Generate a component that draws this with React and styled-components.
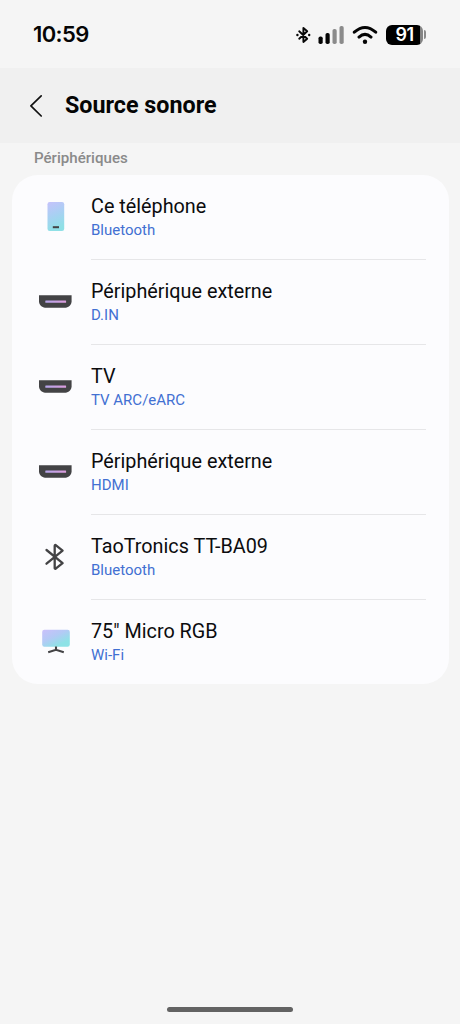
import React from "react";
import styled, { createGlobalStyle } from "styled-components";

const ink = "#0c0c0e";
const blue = "#4270d2";
const dark = "#434345";

const GlobalStyle = createGlobalStyle`
  * {
    box-sizing: border-box;
  }
  body {
    margin: 0;
    background-color: #f5f5f5;
    font-family: Roboto, "Liberation Sans", sans-serif;
  }
`;

const Screen = styled.div`
  width: 460px;
  height: 1024px;
  display: flex;
  flex-direction: column;
  overflow: hidden;
  background-color: #f5f5f5;
`;

const StatusBar = styled.div`
  height: 68px;
  display: flex;
  align-items: center;
  justify-content: space-between;
  padding: 1px 34px 0 33px;
`;

const Clock = styled.span`
  font-family: Inter, sans-serif;
  font-weight: 600;
  font-size: 22px;
  line-height: 28px;
  margin-top: -1px;
  letter-spacing: -0.6px;
  color: #050505;
`;

const StatusIcons = styled.div`
  display: flex;
  align-items: center;
  height: 26px;
`;

const Glyph = styled.svg`
  display: block;
  flex: none;
  margin-right: ${(props) => props.$gap || 0}px;
`;

const Battery = styled.div`
  width: 37px;
  height: 20px;
  border-radius: 6px;
  background: linear-gradient(90deg, #000 34px, #858585 34px);
  display: flex;
  align-items: center;
  justify-content: center;
  color: #fff;
  font-family: Inter, sans-serif;
  font-weight: 600;
  font-size: 18px;
  line-height: 20px;
  letter-spacing: -0.6px;
`;

const BatteryTip = styled.div`
  width: 2px;
  height: 9px;
  margin-left: 1px;
  border-radius: 0 2px 2px 0;
  background-color: #8b8b8b;
`;

const Header = styled.header`
  height: 75px;
  display: flex;
  align-items: center;
  padding: 0 29px;
  background-color: #f0f0f0;
`;

const Title = styled.h1`
  margin: -1px 0 0 22px;
  font-size: 23.3px;
  line-height: 30px;
  font-weight: 700;
  color: #050505;
`;

const SectionLabel = styled.h2`
  margin: 0;
  height: 32px;
  padding: 5px 34px 0;
  font-size: 15.1px;
  line-height: 20px;
  font-weight: 500;
  color: #8a8a8a;
`;

const Card = styled.ul`
  list-style: none;
  margin: 0 11px 0 12px;
  padding: 0;
  border-radius: 26px;
  background-color: #fcfcfe;
`;

const Row = styled.li`
  height: 85px;
  display: grid;
  grid-template-columns: 79px 1fr;
  padding-right: 23px;

  &:last-child {
    height: 84px;
  }
`;

const IconCell = styled.div`
  padding: 22px 0 0 23px;
`;

const Details = styled.div`
  display: flex;
  flex-direction: column;
  padding-top: 19px;
  border-bottom: 1px solid ${(props) => (props.$last ? "transparent" : "#e6e6e8")};
`;

const Name = styled.span`
  font-size: 19.8px;
  line-height: 25px;
  color: ${ink};
`;

const Link = styled.span`
  font-size: 15px;
  line-height: 22px;
  color: ${blue};
`;

const HomeIndicator = styled.div`
  width: 126px;
  height: 5px;
  margin: auto auto 12px;
  border-radius: 3px;
  background-color: #636363;
`;

const PhoneIcon = () => (
  <Glyph width="40" height="40" viewBox="0 0 40 40">
    <defs>
      <linearGradient id="phone" x1="0" y1="0" x2="0.25" y2="1">
        <stop offset="0" stopColor="#c5c2fb" />
        <stop offset="0.5" stopColor="#a9d0f3" />
        <stop offset="1" stopColor="#8fe0e6" />
      </linearGradient>
    </defs>
    <rect x="12.5" y="5" width="16.7" height="29" rx="2.2" fill="url(#phone)" />
    <rect x="17.8" y="29.2" width="6.2" height="2" fill={dark} />
  </Glyph>
);

const PortIcon = () => (
  <Glyph width="40" height="40" viewBox="0 0 40 40">
    <defs>
      <linearGradient id="port" x1="0" y1="0" x2="1" y2="0">
        <stop offset="0" stopColor="#b5a5ea" />
        <stop offset="1" stopColor="#dc9ddd" />
      </linearGradient>
    </defs>
    <path
      d="M4 13.2h32.6v6.3c0 2.8-2.9 6.2-6 6.2H10c-3.1 0-6-3.4-6-6.2z"
      fill={dark}
    />
    <rect x="10.3" y="18.4" width="20.8" height="2.4" rx="0.5" fill="url(#port)" />
  </Glyph>
);

const BluetoothIcon = () => (
  <Glyph width="40" height="40" viewBox="0 0 40 40">
    <path
      d="M11.5 13l16.1 13.2-6.9 5.5q-1 .4-1-.8V8.9q0-1.2 1-.8l6.9 5.5L11.5 26.7"
      fill="none"
      stroke={dark}
      strokeWidth="2.3"
      strokeLinecap="round"
      strokeLinejoin="round"
    />
  </Glyph>
);

const TvIcon = () => (
  <Glyph width="40" height="40" viewBox="0 0 40 40">
    <defs>
      <linearGradient id="tv" x1="0.1" y1="0" x2="0.9" y2="1">
        <stop offset="0" stopColor="#c8c1fa" />
        <stop offset="0.4" stopColor="#b3caf5" />
        <stop offset="0.8" stopColor="#8ee2e6" />
      </linearGradient>
    </defs>
    <rect x="7.2" y="7.8" width="27.6" height="17" rx="2.2" fill="url(#tv)" />
    <path
      d="M21 24.6v3M13.2 30.2l7.8-2.4 7.8 2.4"
      fill="none"
      stroke={dark}
      strokeWidth="2.1"
    />
  </Glyph>
);

const icons = {
  phone: PhoneIcon,
  port: PortIcon,
  bluetooth: BluetoothIcon,
  tv: TvIcon,
};

const devices = [
  { name: "Ce téléphone", link: "Bluetooth", icon: "phone" },
  { name: "Périphérique externe", link: "D.IN", icon: "port" },
  { name: "TV", link: "TV ARC/eARC", icon: "port" },
  { name: "Périphérique externe", link: "HDMI", icon: "port" },
  { name: "TaoTronics TT-BA09", link: "Bluetooth", icon: "bluetooth" },
  { name: '75" Micro RGB', link: "Wi-Fi", icon: "tv" },
];

const Status = () => (
  <StatusBar>
    <Clock>10:59</Clock>
    <StatusIcons>
      <Glyph $gap={7} width="15" height="18" viewBox="0 0 15 18">
        <path
          d="M3.2 5.3l8 7.4-3.8 3.3V2l3.8 3.3-8 7.4"
          fill="none"
          stroke="#080808"
          strokeWidth="1.9"
          strokeLinecap="round"
          strokeLinejoin="round"
        />
        <circle cx="1.4" cy="9" r="1.2" fill="#080808" />
        <circle cx="13.2" cy="9" r="1.2" fill="#080808" />
      </Glyph>
      <Glyph $gap={8} width="26" height="20" viewBox="0 0 26 20">
        <rect x="0.5" y="11.5" width="4.2" height="7.5" rx="1.8" fill="#050505" />
        <rect x="7.5" y="8" width="4.2" height="11" rx="1.8" fill="#050505" />
        <rect x="14.5" y="4" width="4.2" height="15" rx="1.8" fill="#8b8b8b" />
        <rect x="21.5" y="1" width="4.2" height="18" rx="1.8" fill="#8b8b8b" />
      </Glyph>
      <Glyph $gap={8} width="26" height="20" viewBox="0 0 26 20">
        <path
          d="M2.3 7.2Q13-2.2 23.7 7.2M7 12.1q6-5.4 12 0"
          fill="none"
          stroke="#050505"
          strokeWidth="3"
          strokeLinecap="round"
        />
        <circle cx="13" cy="16.8" r="2.2" fill="#050505" />
      </Glyph>
      <Battery>91</Battery>
      <BatteryTip />
    </StatusIcons>
  </StatusBar>
);

export default () => {
  return (
    <Screen>
      <GlobalStyle />
      <Status />
      <Header>
        <Glyph width="14" height="24" viewBox="0 0 14 24">
          <path
            d="M12.2 1.8L1.9 11.8l10.3 10.2"
            fill="none"
            stroke="#111"
            strokeWidth="1.7"
            strokeLinecap="round"
            strokeLinejoin="round"
          />
        </Glyph>
        <Title>Source sonore</Title>
      </Header>
      <SectionLabel>Périphériques</SectionLabel>
      <Card>
        {devices.map((device, index) => {
          const Icon = icons[device.icon];
          return (
            <Row key={index}>
              <IconCell>
                <Icon />
              </IconCell>
              <Details $last={index === devices.length - 1}>
                <Name>{device.name}</Name>
                <Link>{device.link}</Link>
              </Details>
            </Row>
          );
        })}
      </Card>
      <HomeIndicator />
    </Screen>
  );
};
